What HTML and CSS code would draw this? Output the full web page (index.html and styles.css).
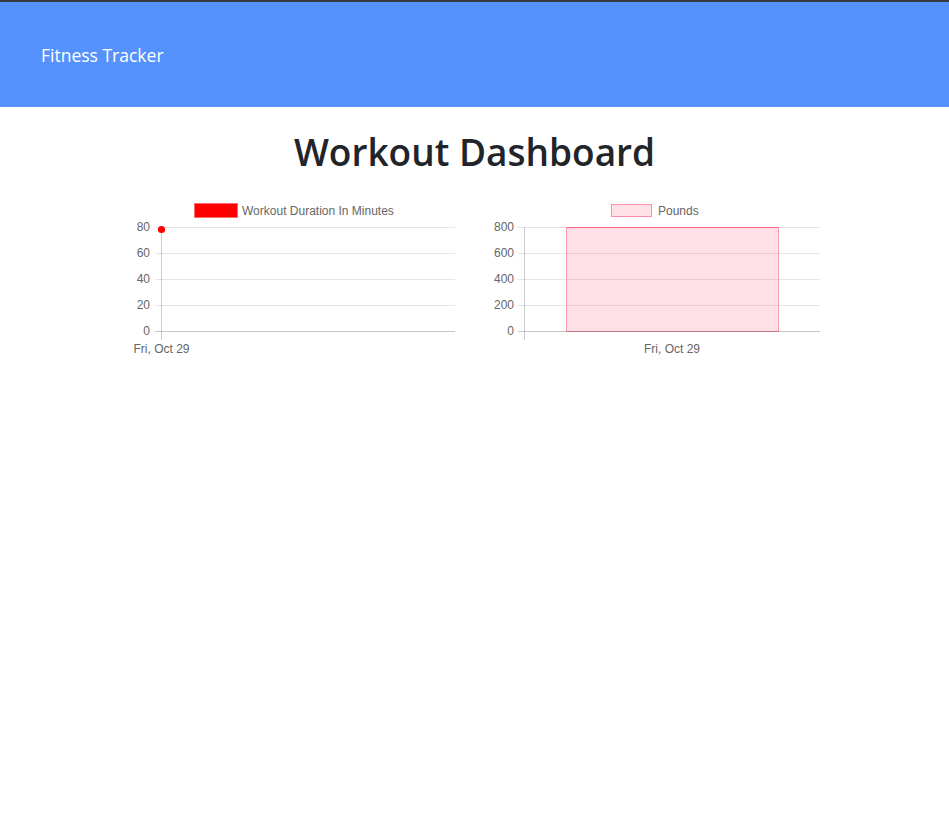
FILE: index.html
```html
<!DOCTYPE html>
<html>
<head>
<meta charset="utf-8">
<link rel="stylesheet" href="styles.css">
</head>
<body>
<header class="navbar"><span class="brand">Fitness Tracker</span></header>
<main class="content">
  <h1 class="title">Workout Dashboard</h1>
  <div class="charts">
    <svg class="chart" width="332" height="165" viewBox="0 0 332 165">
      <rect x="67.5" y="8.5" width="43" height="14" fill="#ff0000" stroke="#ff6b6b"/>
      <text class="legend" x="115" y="19.5">Workout Duration In Minutes</text>
      <g stroke="rgba(0,0,0,0.1)">
        <line x1="28" y1="32.5" x2="328" y2="32.5"/>
        <line x1="28" y1="58.5" x2="328" y2="58.5"/>
        <line x1="28" y1="84.5" x2="328" y2="84.5"/>
        <line x1="28" y1="110.5" x2="328" y2="110.5"/>
      </g>
      <line x1="28" y1="136.5" x2="328" y2="136.5" stroke="rgba(0,0,0,0.22)"/>
      <line x1="34.5" y1="32" x2="34.5" y2="145" stroke="rgba(0,0,0,0.2)"/>
      <g class="tick" text-anchor="end">
        <text x="23" y="35.5">80</text>
        <text x="23" y="61.5">60</text>
        <text x="23" y="87.5">40</text>
        <text x="23" y="113.5">20</text>
        <text x="23" y="139.5">0</text>
      </g>
      <circle cx="34.5" cy="34.5" r="3.6" fill="#ff0000"/>
      <text class="tick" x="34.5" y="157.5" text-anchor="middle">Fri, Oct 29</text>
    </svg>
    <svg class="chart" width="332" height="165" viewBox="0 0 332 165">
      <rect x="123.5" y="9.5" width="40" height="12" fill="rgba(255,99,132,0.2)" stroke="#ff8fa6"/>
      <text class="legend" x="170" y="19.5">Pounds</text>
      <g stroke="rgba(0,0,0,0.1)">
        <line x1="30" y1="32.5" x2="332" y2="32.5"/>
        <line x1="30" y1="58.5" x2="332" y2="58.5"/>
        <line x1="30" y1="84.5" x2="332" y2="84.5"/>
        <line x1="30" y1="110.5" x2="332" y2="110.5"/>
      </g>
      <rect x="78.5" y="32.5" width="212" height="104" fill="rgba(255,99,132,0.2)" stroke="#ff99ad"/>
      <line x1="78.5" y1="32.5" x2="290.5" y2="32.5" stroke="#ff6384"/>
      <line x1="30" y1="136.5" x2="332" y2="136.5" stroke="rgba(0,0,0,0.22)"/>
      <line x1="36.5" y1="32" x2="36.5" y2="145" stroke="rgba(0,0,0,0.2)"/>
      <g class="tick" text-anchor="end">
        <text x="26" y="35.5">800</text>
        <text x="26" y="61.5">600</text>
        <text x="26" y="87.5">400</text>
        <text x="26" y="113.5">200</text>
        <text x="26" y="139.5">0</text>
      </g>
      <text class="tick" x="184" y="157.5" text-anchor="middle">Fri, Oct 29</text>
    </svg>
  </div>
</main>
</body>
</html>
```
FILE: styles.css
```css
html, body {
  margin: 0;
  padding: 0;
  background: #fff;
}
body {
  font-family: "Open Sans", "Noto Sans", sans-serif;
  color: #212529;
}
.navbar {
  border-top: 2px solid #3a3a3a;
  background: #5592fe;
  height: 105px;
  display: flex;
  align-items: center;
  padding-left: 41px;
}
.brand {
  color: #fff;
  font-size: 17.5px;
  line-height: 1;
  margin-top: 2px;
}
.content {
  display: flex;
  flex-direction: column;
  align-items: center;
}
.title {
  margin: 19px 0 0 0;
  font-size: 37px;
  font-weight: 600;
  line-height: 52px;
  letter-spacing: 0;
}
.charts {
  display: flex;
  gap: 29px;
  margin-top: 17px;
  margin-right: 2px;
}
.chart {
  display: block;
  font-family: "Liberation Sans", Arial, sans-serif;
}
.legend, .tick {
  font-size: 12px;
  fill: #666;
}
```
